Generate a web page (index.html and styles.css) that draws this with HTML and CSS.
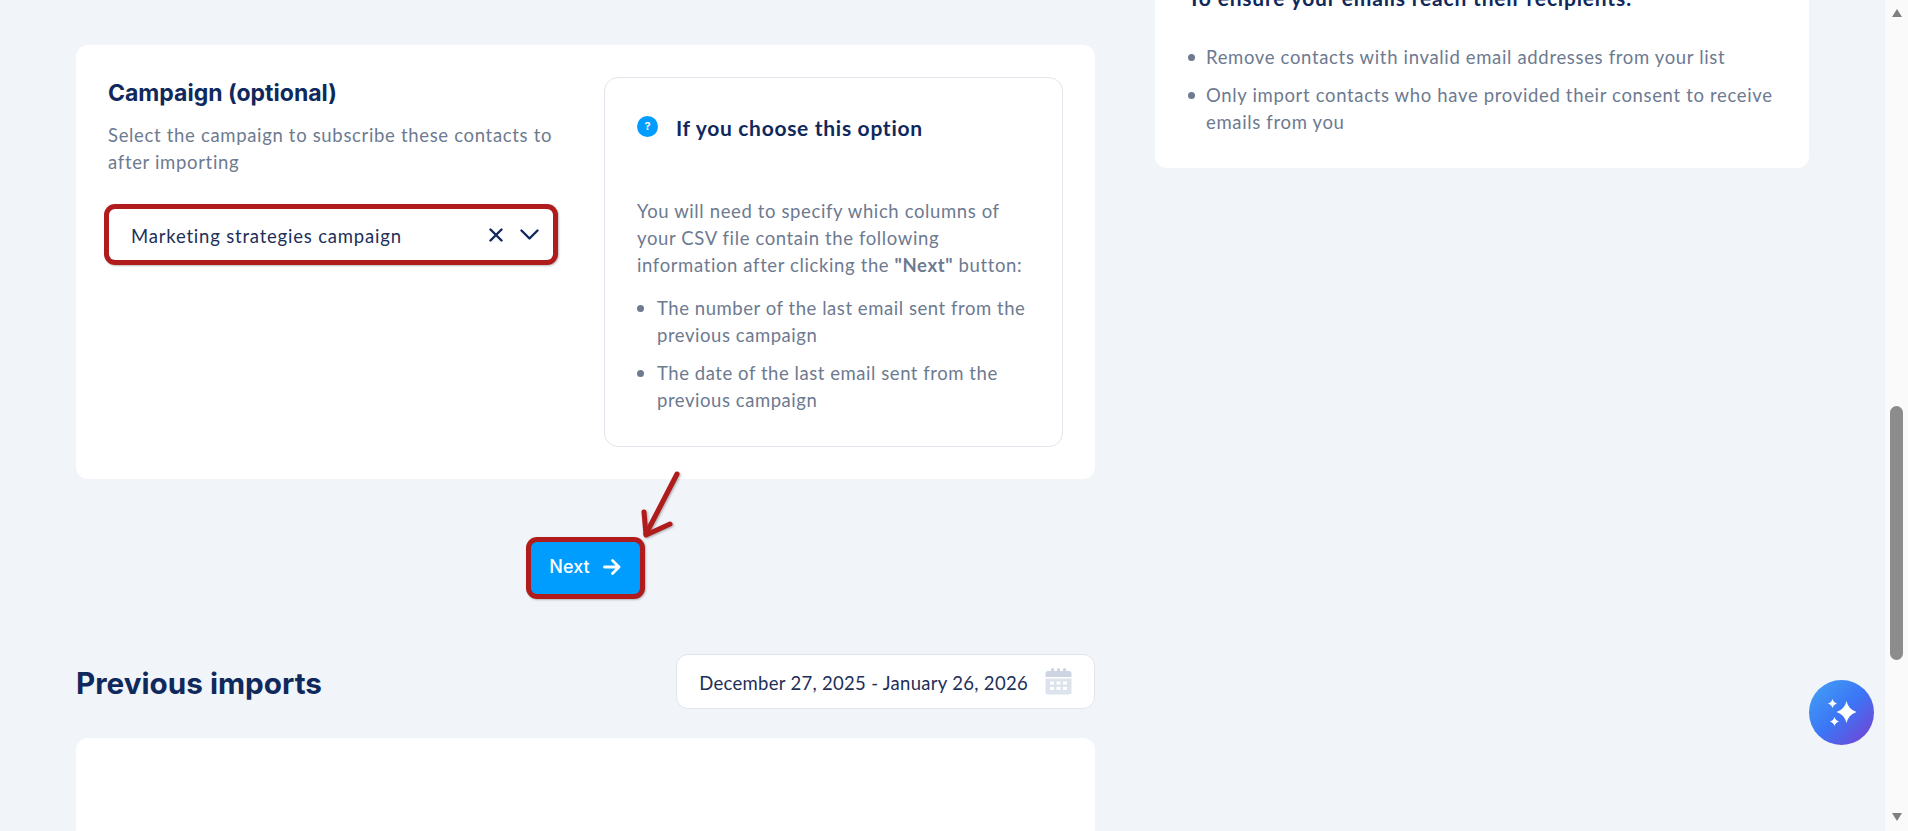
FILE: index.html
```html
<!DOCTYPE html>
<html lang="en">
  <head>
    <meta charset="UTF-8" />
    <meta name="viewport" content="width=device-width, initial-scale=1.0" />
    <title>Import contacts</title>
    <link rel="stylesheet" href="styles.css">
  </head>
  <body>
    <div class="page">
      <div class="main">
        <div class="left-col">
          <section class="card campaign-card">
            <div class="campaign-field">
              <h2 class="field-title">Campaign (optional)</h2>
              <p class="field-desc">Select the campaign to subscribe these contacts to after importing</p>
              <div class="select-box">
                <span class="select-value">Marketing strategies campaign</span>
                <svg class="icon-clear" width="14" height="14" viewBox="0 0 14 14">
                  <path d="M1.5 1.5l11 11M12.5 1.5l-11 11" fill="none" stroke="#10295c" stroke-width="2.4" stroke-linecap="round" />
                </svg>
                <svg class="icon-chevron" width="19" height="11" viewBox="0 0 19 11">
                  <path d="M1.5 1.5l8 8 8-8" fill="none" stroke="#10295c" stroke-width="2.4" stroke-linecap="round" stroke-linejoin="round" />
                </svg>
              </div>
            </div>
            <div class="info-box">
              <div class="info-head">
                <span class="info-icon">?</span>
                <h3 class="info-title">If you choose this option</h3>
              </div>
              <p class="info-text">You will need to specify which columns of your CSV file contain the following information after clicking the <b>"Next"</b> button:</p>
              <ul class="info-list">
                <li>The number of the last email sent from the previous campaign</li>
                <li>The date of the last email sent from the previous campaign</li>
              </ul>
            </div>
          </section>

          <div class="next-row">
            <button class="next-btn">
              Next
              <svg width="18" height="16" viewBox="0 0 18 16">
                <path d="M1.5 8h14.5M9.5 1.5L16 8l-6.5 6.5" fill="none" stroke="#fff" stroke-width="2.8" stroke-linecap="round" stroke-linejoin="round" />
              </svg>
            </button>
          </div>

          <div class="imports-head">
            <h2 class="imports-title">Previous imports</h2>
            <div class="date-range">
              <span class="date-text">December 27, 2025 - January 26, 2026</span>
              <svg width="27" height="27" viewBox="0 0 27 27">
                <path d="M3 3h3V1.500a1.500 1.500 0 0 1 3 0V3h3V1.500a1.500 1.500 0 0 1 3 0V3h3V1.500a1.500 1.500 0 0 1 3 0V3h3a2.500 2.500 0 0 1 2.500 2.500V9H.5V5.500A2.500 2.500 0 0 1 3 3z" fill="#ccd5e1" />
                <path d="M.5 10.500h26V24a2.500 2.500 0 0 1-2.500 2.500H3A2.500 2.500 0 0 1 .5 24z" fill="#dde3ec" />
                <path d="M5 13.500h4v3H5zM11.500 13.500h4v3h-4zM18 13.500h4v3h-4zM5 19h4v3H5zM11.500 19h4v3h-4zM18 19h4v3h-4z" fill="#fff" />
              </svg>
            </div>
          </div>

          <section class="card imports-card"></section>
        </div>

        <aside class="right-col">
          <section class="card tips-card">
            <h3 class="tips-title">To ensure your emails reach their recipients:</h3>
            <ul class="tips-list">
              <li>Remove contacts with invalid email addresses from your list</li>
              <li>Only import contacts who have provided their consent to receive emails from you</li>
            </ul>
          </section>
        </aside>
      </div>

      <div class="scrollbar">
        <span class="scroll-arrow up"></span>
        <div class="scroll-track"><div class="scroll-thumb"></div></div>
        <span class="scroll-arrow down"></span>
      </div>
    </div>

    <!-- annotation arrow over the Next button -->
    <svg class="red-arrow" width="50" height="80" viewBox="0 0 50 80">
      <g fill="none" stroke="#b01c1c" stroke-width="5" stroke-linecap="round" stroke-linejoin="round">
        <path d="M38 4L7 64" />
        <path d="M5 42L7 65l24-11" />
      </g>
    </svg>

    <button class="ai-btn">
      <svg width="34" height="34" viewBox="0 0 34 34">
        <path d="M21.500 5Q23.500 13.500 31.500 16Q23.500 18.500 21.500 27Q19.500 18.500 11.500 16Q19.500 13.500 21.500 5z" fill="#fff" />
        <path d="M7.500 3Q8.500 6.500 12 7.500Q8.500 8.500 7.500 12Q6.500 8.500 3 7.500Q6.500 6.500 7.500 3z" fill="#fff" />
        <path d="M9.500 21Q10.500 24.500 14 25.500Q10.500 26.500 9.500 30Q8.500 26.500 5 25.500Q8.500 24.500 9.500 21z" fill="#fff" />
      </svg>
    </button>
  </body>
</html>
```
FILE: styles.css
```css
* {
  margin: 0;
  padding: 0;
  box-sizing: border-box;
}

ul {
  list-style: none;
}

body {
  height: 831px;
  overflow: hidden;
  background: #f1f4f9;
  font-family: "Lato", "Open Sans", sans-serif;
  font-size: 18.5px;
  letter-spacing: 0.55px;
  line-height: 27px;
  color: #6d7a90;
}

.page {
  display: flex;
  height: 831px;
}

.main {
  flex: 1;
  display: flex;
  align-items: flex-start;
  gap: 60px;
  padding-left: 76px;
}

.card {
  background: #fff;
  border-radius: 12px;
}

.left-col {
  width: 1019px;
  margin-top: 45px;
}

.campaign-card {
  display: flex;
  gap: 48px;
  padding: 32px;
  height: 434px;
}

.campaign-field {
  width: 448px;
}

.field-title {
  margin-top: 1px;
  font-family: "Inter", sans-serif;
  font-size: 23px;
  letter-spacing: 0;
  line-height: 30px;
  font-weight: 700;
  color: #10295c;
}

.field-desc {
  margin-top: 14px;
  letter-spacing: 0.67px;
}

.select-box {
  display: flex;
  align-items: center;
  width: 444px;
  height: 51px;
  margin: 33px 0 0 1px;
  padding: 3px 14px 0 22px;
  background: #fff;
  border-radius: 6px;
  box-shadow: 0 0 0 5px #b01c1c, 1px 1px 2px 5px rgba(90, 90, 90, 0.4);
  color: #1d2f59;
  letter-spacing: 0.8px;
}

.select-value {
  flex: 1;
}

.icon-clear {
  margin-top: -3px;
}

.icon-chevron {
  margin-top: -3px;
  margin-left: 17px;
}

.info-box {
  width: 459px;
  height: 370px;
  padding: 35px 30px 0 32px;
  border: 1px solid #e1e5eb;
  border-radius: 14px;
}

.info-head {
  display: flex;
  align-items: center;
  gap: 18px;
  height: 30px;
}

.info-icon {
  width: 21px;
  height: 21px;
  margin-top: -3px;
  border-radius: 50%;
  background: #009dff;
  color: #fff;
  font-family: "Inter", sans-serif;
  font-size: 11px;
  letter-spacing: 0;
  line-height: 21px;
  font-weight: 700;
  text-align: center;
}

.info-title {
  font-size: 21px;
  letter-spacing: 0.7px;
  line-height: 30px;
  font-weight: 700;
  color: #10295c;
}

.info-text {
  margin-top: 55px;
  letter-spacing: 0.62px;
}

.info-text b {
  font-weight: 700;
}

.info-list {
  margin-top: 16px;
}

.info-list li,
.tips-list li {
  position: relative;
  padding-left: 20px;
}

.info-list li + li {
  margin-top: 11px;
}

.info-list li::before,
.tips-list li::before {
  content: "";
  position: absolute;
  left: 0;
  top: 10px;
  width: 7px;
  height: 7px;
  border-radius: 50%;
  background: #6d7a90;
}

.next-row {
  display: flex;
  justify-content: center;
  margin-top: 63px;
}

.next-btn {
  display: flex;
  align-items: center;
  justify-content: center;
  gap: 13px;
  width: 109px;
  height: 52px;
  padding-bottom: 3px;
  margin-right: 1px;
  border: none;
  border-radius: 6px;
  background: #009dff;
  box-shadow: 0 0 0 5px #b01c1c, 1px 1px 2px 5px rgba(90, 90, 90, 0.4);
  color: #fff;
  font-family: "Inter", sans-serif;
  font-size: 18px;
  letter-spacing: 0;
  font-weight: 500;
}

.imports-head {
  display: flex;
  align-items: center;
  justify-content: space-between;
  margin-top: 60px;
}

.imports-title {
  margin-top: 2px;
  font-family: "Inter", sans-serif;
  font-size: 29.7px;
  letter-spacing: 0;
  line-height: 40px;
  font-weight: 700;
  color: #10295c;
}

.date-range {
  display: flex;
  align-items: center;
  gap: 17px;
  height: 55px;
  padding: 0 22px;
  background: #fff;
  border: 1px solid #e1e5eb;
  border-radius: 12px;
  color: #1d2f59;
  letter-spacing: 0.3px;
}

.date-text {
  padding-top: 3px;
}

.imports-card {
  height: 93px;
  margin-top: 29px;
  border-radius: 12px 12px 0 0;
}

.right-col {
  width: 654px;
  margin-top: -49px;
}

.tips-card {
  padding: 32px 33px;
}

.tips-title {
  font-size: 21px;
  letter-spacing: 0.8px;
  line-height: 30px;
  font-weight: 700;
  color: #10295c;
}

.tips-list {
  margin-top: 31px;
  letter-spacing: 0.66px;
}

.tips-list li {
  padding-left: 18px;
}

.tips-list li + li {
  margin-top: 11px;
}

.scrollbar {
  display: flex;
  flex-direction: column;
  align-items: center;
  width: 23px;
  height: 831px;
  background: #fafafa;
}

.scroll-track {
  flex: 1;
  width: 100%;
}

.scroll-thumb {
  width: 13px;
  height: 254px;
  margin: 389px auto 0;
  border-radius: 7px;
  background: #8c8c8c;
}

.scroll-arrow {
  width: 0;
  height: 0;
  border-left: 5.5px solid transparent;
  border-right: 5.5px solid transparent;
}

.scroll-arrow.up {
  margin-top: 9px;
  border-bottom: 8px solid #808080;
}

.scroll-arrow.down {
  margin-bottom: 10px;
  border-top: 8px solid #808080;
}

.red-arrow {
  position: absolute;
  left: 639px;
  top: 470px;
  filter: drop-shadow(1px 1px 1px rgba(90, 90, 90, 0.5));
}

.ai-btn {
  position: absolute;
  left: 1809px;
  top: 680px;
  width: 65px;
  height: 65px;
  display: flex;
  align-items: center;
  justify-content: center;
  border: none;
  border-radius: 50%;
  background: linear-gradient(135deg, #43a3f5 0%, #3b76f6 50%, #7a3dd0 100%);
}
```
